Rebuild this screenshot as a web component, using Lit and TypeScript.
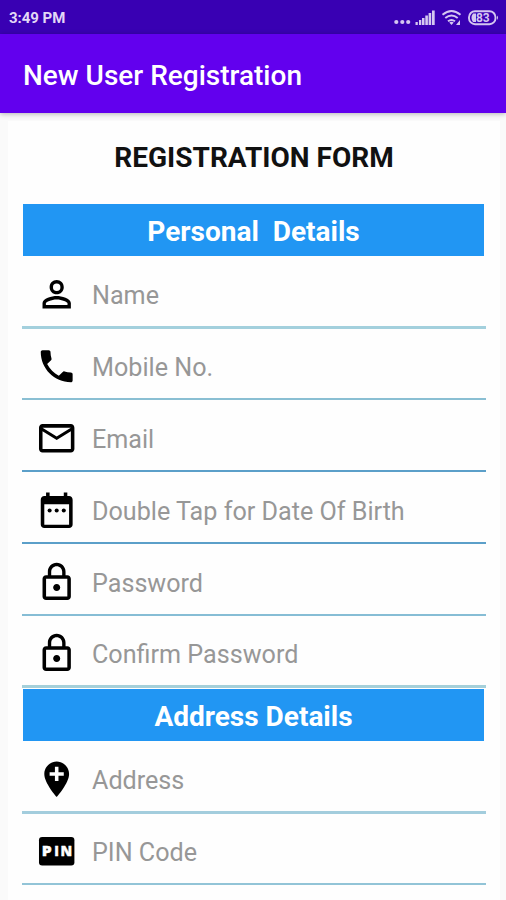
import { LitElement, html, css, svg } from "lit";
import { customElement } from "lit/decorators.js";
import { styleMap } from "lit/directives/style-map.js";

const icons = {
  person: svg`<path d="M12 5.9a2.1 2.1 0 1 1 0 4.2 2.1 2.1 0 0 1 0-4.2m0 9c2.97 0 6.1 1.46 6.1 2.1v1.1H5.9V17c0-.64 3.13-2.1 6.1-2.1M12 4C9.79 4 8 5.79 8 8s1.79 4 4 4 4-1.79 4-4-1.79-4-4-4zm0 9c-2.67 0-8 1.34-8 4v3h16v-3c0-2.66-5.33-4-8-4z"/>`,
  phone: svg`<path d="M6.62 10.79c1.44 2.83 3.76 5.14 6.59 6.59l2.2-2.2c.27-.27.67-.36 1.02-.24 1.12.37 2.33.57 3.57.57.55 0 1 .45 1 1V20c0 .55-.45 1-1 1-9.39 0-17-7.61-17-17 0-.55.45-1 1-1h3.5c.55 0 1 .45 1 1 0 1.25.2 2.45.57 3.57.11.35.03.74-.25 1.02l-2.2 2.2z"/>`,
  mail: svg`<path d="M20 4H4c-1.1 0-1.99.9-1.99 2L2 18c0 1.1.9 2 2 2h16c1.1 0 2-.9 2-2V6c0-1.1-.9-2-2-2zm0 14H4V8l8 5 8-5v10zm-8-7L4 6h16l-8 5z"/>`,
  calendar: svg`<path d="M19 4h-1V2h-2v2H8V2H6v2H5c-1.11 0-2 .9-2 2v14c0 1.1.89 2 2 2h14c1.1 0 2-.9 2-2V6c0-1.1-.9-2-2-2zm0 16.2H5V8.6h14z"/><circle cx="8" cy="12.1" r="1.15"/><circle cx="12" cy="12.1" r="1.15"/><circle cx="16" cy="12.1" r="1.15"/>`,
  lock: svg`<path d="M12 17c1.1 0 2-.9 2-2s-.9-2-2-2-2 .9-2 2 .9 2 2 2zm6-9h-1V6c0-2.76-2.24-5-5-5S7 3.24 7 6v2H6c-1.1 0-2 .9-2 2v10c0 1.1.9 2 2 2h12c1.1 0 2-.9 2-2V10c0-1.1-.9-2-2-2zM8.9 6c0-1.71 1.39-3.1 3.1-3.1s3.1 1.39 3.1 3.1v2H8.9V6zM18 20H6V10h12v10z"/>`,
  place: svg`<path d="M12 2C8.14 2 5 5.14 5 9c0 5.25 7 13 7 13s7-7.75 7-13c0-3.86-3.14-7-7-7zm4 8h-3v3h-2v-3H8V8h3V5h2v3h3v2z"/>`,
  pin: svg`<rect x="2" y="4" width="20" height="16" rx="1.8"/><text class="pin"><tspan x="3.5" y="14.9" textLength="5.6" lengthAdjust="spacingAndGlyphs">P</tspan><tspan x="10.6">I</tspan><tspan x="14.1" textLength="6.6" lengthAdjust="spacingAndGlyphs">N</tspan></text>`,
};

interface Field {
  icon: keyof typeof icons;
  label: string;
  height: number;
  line: number;
  color: string;
}

const personal: Field[] = [
  { icon: "person", label: "Name", height: 73, line: 3, color: "#a3d0dd" },
  { icon: "phone", label: "Mobile No.", height: 71, line: 2, color: "#8abfd3" },
  { icon: "mail", label: "Email", height: 72, line: 2, color: "#5b9fc9" },
  { icon: "calendar", label: "Double Tap for Date Of Birth", height: 72, line: 2, color: "#5b9fc9" },
  { icon: "lock", label: "Password", height: 72, line: 2, color: "#86bdd5" },
  { icon: "lock", label: "Confirm Password", height: 72, line: 3, color: "#a5d0da" },
];

const address: Field[] = [
  { icon: "place", label: "Address", height: 73, line: 3, color: "#a3cddd" },
  { icon: "pin", label: "PIN Code", height: 71, line: 2, color: "#92c4d7" },
];

@customElement("app-root")
export class AppRoot extends LitElement {
  static styles = css`
    :host {
      display: flex;
      flex-direction: column;
      height: 900px;
      overflow: hidden;
      background: #fafafa;
      font-family: Roboto, "Liberation Sans", sans-serif;
    }
    .status {
      flex: none;
      height: 34px;
      box-sizing: border-box;
      padding: 1px 7px 0 9px;
      display: flex;
      align-items: center;
      justify-content: space-between;
      background: #3900b3;
      color: #e2d8f6;
      font-size: 15px;
      font-weight: 700;
    }
    .time { letter-spacing: -0.05px; }
    .indicators { display: block; width: 106px; height: 20px; fill: #d5c7f1; }
    .stroke { fill: none; stroke: #d5c7f1; stroke-width: 1.9; }
    .level { font: 700 12px Roboto, sans-serif; fill: #d5c7f1; }
    .appbar {
      flex: none;
      height: 79px;
      box-sizing: border-box;
      padding: 3px 23px 0;
      display: flex;
      align-items: center;
      background: #6200ee;
      color: #fff;
      font-size: 28px;
      font-weight: 500;
      box-shadow: 0 1px 5px rgba(0, 0, 0, 0.28);
      z-index: 1;
    }
    .card {
      flex: 1;
      margin: 8px 6px 0 8px;
      padding: 0 14px;
      background: #fefefe;
    }
    h1 {
      margin: 0;
      height: 83px;
      line-height: 74px;
      text-align: center;
      font-size: 28px;
      font-weight: 700;
      color: #111;
      white-space: nowrap;
    }
    h2 {
      margin: 0 2px 0 1px;
      height: 52px;
      line-height: 55px;
      text-align: center;
      white-space: pre;
      font-size: 28px;
      font-weight: 700;
      color: #fff;
      background: #2196f3;
    }
    .second { margin-top: 1px; }
    .row {
      box-sizing: border-box;
      display: flex;
      align-items: flex-end;
      padding-left: 13px;
      border-bottom: solid;
    }
    .icon { width: 42.5px; height: 42.5px; margin-bottom: 11px; flex: none; fill: #000; }
    .pin { font: 800 7.6px "Open Sans", sans-serif; fill: #fff; stroke: #fff; stroke-width: 0.2; }
    .label {
      margin: 0 0 14.5px 14.5px;
      line-height: 32px;
      font-size: 25.15px;
      color: #979797;
      white-space: nowrap;
    }
  `;

  private row(f: Field) {
    return html`<div
      class="row"
      style=${styleMap({ height: `${f.height}px`, borderBottomWidth: `${f.line}px`, borderColor: f.color })}
    >
      <svg class="icon" viewBox="-0.25 0 24 24">${icons[f.icon]}</svg>
      <span class="label">${f.label}</span>
    </div>`;
  }

  render() {
    return html`
      <div class="status">
        <span class="time">3:49 PM</span>
        <svg class="indicators" viewBox="393 8 106 20">
          <circle cx="396.3" cy="22" r="2.1" />
          <circle cx="402.3" cy="22" r="2.1" />
          <circle cx="408.2" cy="22" r="2.1" />
          <path d="M415.5 22h2.3v3h-2.3zM419 20h2.3v5H419zM422 18h2.5v7H422zM425.3 15.5h2.6v9.5h-2.6zM428.6 13h2.6v12h-2.6zM432 10.5h2.7V25H432z" />
          <path class="stroke" d="M442.5 14.8q9-7.8 18 0M445.3 18.1q6.2-5.1 12.4 0M448 21.3q3.5-2.8 7 0" />
          <path d="M449.3 22.5q2.2-1.6 4.4 0L451.5 25zM460 20v5h-4z" />
          <rect class="stroke" x="469" y="11.2" width="26.5" height="13" rx="6" />
          <path d="M497 15.5q2 2.2 0 4.4zM473 13.5h3v8.5h-3q-3-4.2 0-8.5z" />
          <text class="level" x="482.8" y="22" text-anchor="middle">83</text>
        </svg>
      </div>
      <div class="appbar">New User Registration</div>
      <main class="card">
        <h1>REGISTRATION FORM</h1>
        <h2>Personal  Details</h2>
        ${personal.map((f) => this.row(f))}
        <h2 class="second">Address Details</h2>
        ${address.map((f) => this.row(f))}
      </main>
    `;
  }
}
